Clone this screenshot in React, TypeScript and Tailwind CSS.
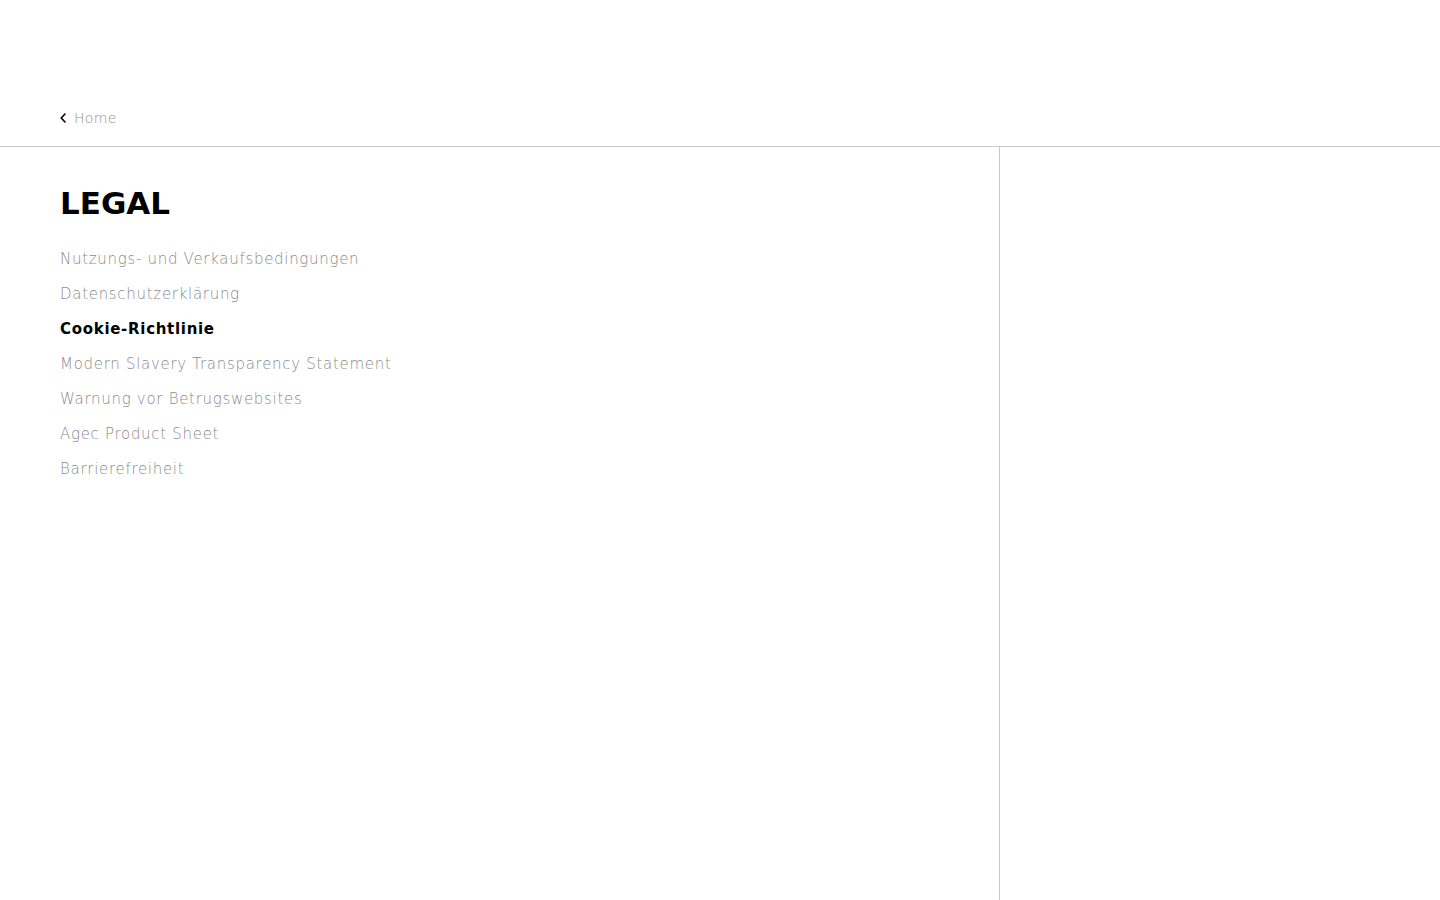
const links = [
  { label: "Nutzungs- und Verkaufsbedingungen", active: false },
  { label: "Datenschutzerklärung", active: false },
  { label: "Cookie-Richtlinie", active: true },
  { label: "Modern Slavery Transparency Statement", active: false },
  { label: "Warnung vor Betrugswebsites", active: false },
  { label: "Agec Product Sheet", active: false },
  { label: "Barrierefreiheit", active: false },
];

export default function App() {
  return (
    <div className="min-h-screen h-[900px] flex flex-col bg-white text-black font-['DejaVu_Sans',sans-serif] overflow-hidden">
      {/* Header */}
      <header className="h-[147px] shrink-0 border-b border-[#c8c8c8] flex items-end px-[60px] pb-[19px]">
        <a href="#" className="flex items-center gap-[8px] text-[14px] leading-[18px] tracking-[0.3px] font-light text-[#8f8f8f]">
          <svg width="6" height="10" viewBox="0 0 6 10" fill="none" className="shrink-0">
            <path d="M5 1 L1.2 5 L5 9" stroke="#000" strokeWidth="1.6" strokeLinecap="round" strokeLinejoin="round" />
          </svg>
          <span>Home</span>
        </a>
      </header>

      {/* Body */}
      <div className="flex flex-1">
        <aside className="w-[1000px] shrink-0 border-r border-[#c8c8c8] pl-[60px] pt-[38px]">
          <h1 className="text-[31px] leading-[36px] font-bold">LEGAL</h1>
          <nav className="mt-[21px] flex flex-col">
            {links.map((l) => (
              <a
                key={l.label}
                href="#"
                className={
                  l.active
                    ? "h-[35px] leading-[35px] text-[15px] tracking-[0.7px] font-bold text-black"
                    : "h-[35px] leading-[35px] text-[15px] tracking-[0.7px] font-light text-[#8a8a8a]"
                }
              >
                {l.label}
              </a>
            ))}
          </nav>
        </aside>
        <main className="flex-1" />
      </div>
    </div>
  );
}
